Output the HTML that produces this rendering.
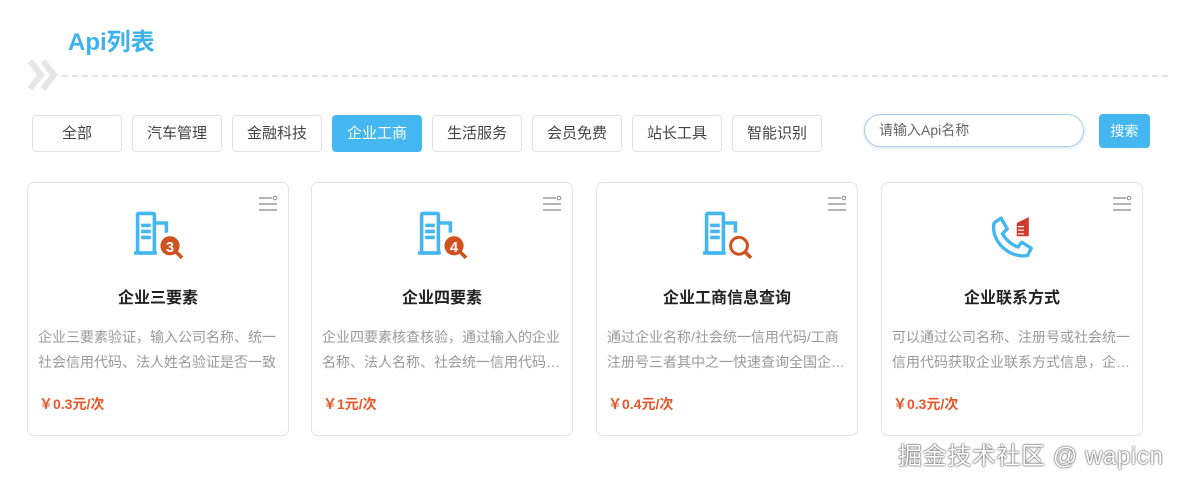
<!DOCTYPE html>
<html><head><meta charset="utf-8"><style>
*{margin:0;padding:0;box-sizing:border-box}
body{width:1187px;height:484px;background:#fff;font-family:"Liberation Sans","Noto Sans CJK SC",sans-serif;position:relative;overflow:hidden}
.title{position:absolute;left:68px;top:22px;font-size:24px;font-weight:bold;color:#3db2ee}
.dash{position:absolute;left:62px;top:75px;width:1106px;border-top:2px dashed #e3e3e3}
.tab{position:absolute;top:115px;width:90px;height:37px;border:1px solid #e2e2e2;border-radius:4px;font-size:15px;color:#444;text-align:center;line-height:35px}
.tab.on{background:#45b7f0;border-color:#45b7f0;color:#fff}
.search{position:absolute;left:864px;top:114px;width:220px;height:33px;border:1px solid #a9cbe6;border-radius:17px;box-shadow:0 1px 3px rgba(100,150,200,.3);font-size:14px;color:#666;line-height:31px;padding-left:14px}
.btn{position:absolute;left:1099px;top:114px;width:51px;height:34px;background:#45b7f0;border-radius:4px;color:#fff;font-size:14px;text-align:center;line-height:34px}
.card{position:absolute;top:182px;width:262px;height:254px;border:1px solid #e4e4e4;border-radius:7px}
.card .menu{position:absolute;right:10px;top:12px}
.card svg.ic{position:absolute;left:50%;margin-left:-30px;top:23px}
.card h3{position:absolute;top:101px;width:100%;text-align:center;font-size:16px;color:#222;font-weight:bold}
.card p{position:absolute;left:10px;top:142px;width:242px;font-size:14px;line-height:25px;color:#999;height:50px;overflow:hidden}
.card .pr{position:absolute;left:11px;top:211px;font-size:14px;font-weight:bold;color:#e8572a}
.wm{position:absolute;left:898px;top:436px;font-size:24px;letter-spacing:0.6px;color:#fff;text-shadow:0 0 2px #444,0 0 1px #333}
</style></head><body>
<div class="title">Api列表</div>
<svg style="position:absolute;left:27px;top:58px" width="36" height="34"><path d="M3 3 L14 17 L3 31 M16 3 L27 17 L16 31" stroke="#e6e6e6" stroke-width="6" fill="none"/></svg>
<div class="dash"></div>
<div class="tab" style="left:32px">全部</div>
<div class="tab" style="left:132px">汽车管理</div>
<div class="tab" style="left:232px">金融科技</div>
<div class="tab on" style="left:332px">企业工商</div>
<div class="tab" style="left:432px">生活服务</div>
<div class="tab" style="left:532px">会员免费</div>
<div class="tab" style="left:632px">站长工具</div>
<div class="tab" style="left:732px">智能识别</div>
<div class="search">请输入Api名称</div>
<div class="btn">搜索</div>

<div class="card" style="left:27px">
<svg class="menu" width="20" height="18"><path d="M1 3H14M1 9H19M1 15H19" stroke="#888" stroke-width="1.2"/><circle cx="17" cy="3" r="1.8" fill="none" stroke="#888"/></svg>
<svg class="ic" width="60" height="58" viewBox="0 0 50 48"><rect x="8" y="6" width="14" height="33" rx="1" fill="none" stroke="#45b7f0" stroke-width="3"/><path d="M22 14H32V22" stroke="#45b7f0" stroke-width="3" fill="none"/><path d="M11 16H19M11 21H19M11 26H19" stroke="#45b7f0" stroke-width="3"/><path d="M5 39H24" stroke="#45b7f0" stroke-width="3"/><circle cx="35" cy="33" r="8" fill="#d0521f"/><path d="M40 38L45 43" stroke="#d0521f" stroke-width="3"/><text x="35" y="38" font-size="12" font-weight="bold" fill="#fff" text-anchor="middle" font-family="Liberation Sans">3</text></svg>
<h3>企业三要素</h3>
<p>企业三要素验证，输入公司名称、统一社会信用代码、法人姓名验证是否一致</p>
<div class="pr">￥0.3元/次</div></div>

<div class="card" style="left:311px">
<svg class="menu" width="20" height="18"><path d="M1 3H14M1 9H19M1 15H19" stroke="#888" stroke-width="1.2"/><circle cx="17" cy="3" r="1.8" fill="none" stroke="#888"/></svg>
<svg class="ic" width="60" height="58" viewBox="0 0 50 48"><rect x="8" y="6" width="14" height="33" rx="1" fill="none" stroke="#45b7f0" stroke-width="3"/><path d="M22 14H32V22" stroke="#45b7f0" stroke-width="3" fill="none"/><path d="M11 16H19M11 21H19M11 26H19" stroke="#45b7f0" stroke-width="3"/><path d="M5 39H24" stroke="#45b7f0" stroke-width="3"/><circle cx="35" cy="33" r="8" fill="#d0521f"/><path d="M40 38L45 43" stroke="#d0521f" stroke-width="3"/><text x="35" y="38" font-size="12" font-weight="bold" fill="#fff" text-anchor="middle" font-family="Liberation Sans">4</text></svg>
<h3>企业四要素</h3>
<p>企业四要素核查核验，通过输入的企业名称、法人名称、社会统一信用代码…</p>
<div class="pr">￥1元/次</div></div>

<div class="card" style="left:596px">
<svg class="menu" width="20" height="18"><path d="M1 3H14M1 9H19M1 15H19" stroke="#888" stroke-width="1.2"/><circle cx="17" cy="3" r="1.8" fill="none" stroke="#888"/></svg>
<svg class="ic" width="60" height="58" viewBox="0 0 50 48"><rect x="8" y="6" width="14" height="33" rx="1" fill="none" stroke="#45b7f0" stroke-width="3"/><path d="M22 14H32V22" stroke="#45b7f0" stroke-width="3" fill="none"/><path d="M11 16H19M11 21H19M11 26H19" stroke="#45b7f0" stroke-width="3"/><path d="M5 39H24" stroke="#45b7f0" stroke-width="3"/><circle cx="35" cy="33" r="7" fill="#fff" stroke="#d0521f" stroke-width="2.5"/><path d="M40 38L45 43" stroke="#d0521f" stroke-width="3"/></svg>
<h3>企业工商信息查询</h3>
<p>通过企业名称/社会统一信用代码/工商注册号三者其中之一快速查询全国企…</p>
<div class="pr">￥0.4元/次</div></div>

<div class="card" style="left:881px">
<svg class="menu" width="20" height="18"><path d="M1 3H14M1 9H19M1 15H19" stroke="#888" stroke-width="1.2"/><circle cx="17" cy="3" r="1.8" fill="none" stroke="#888"/></svg>
<svg class="ic" width="60" height="58" viewBox="0 0 50 48"><path d="M10 14 L16 10 L21 19 L17 23 C20 28 24 32 30 34 L33 30 L41 35 L38 41 C24 44 7 30 10 14Z" fill="none" stroke="#45b7f0" stroke-width="2.8" stroke-linejoin="round"/><path d="M29 14L39 9V25H29Z" fill="#d23b2b"/><path d="M30 17H35M30 20H35M30 23H35" stroke="#fff" stroke-width="1"/></svg>
<h3>企业联系方式</h3>
<p>可以通过公司名称、注册号或社会统一信用代码获取企业联系方式信息，企…</p>
<div class="pr">￥0.3元/次</div></div>

<div class="wm">掘金技术社区 @ wapicn</div>
</body></html>
